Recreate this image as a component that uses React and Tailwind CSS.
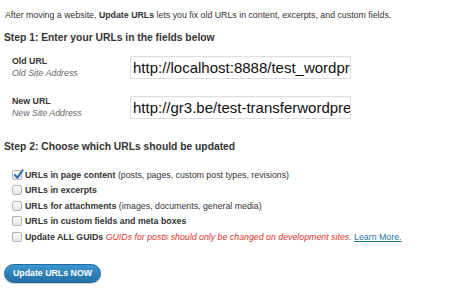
import React from 'react';

const options = [
  { label: 'URLs in page content', note: '(posts, pages, custom post types, revisions)', checked: true },
  { label: 'URLs in excerpts' },
  { label: 'URLs for attachments', note: '(images, documents, general media)' },
  { label: 'URLs in custom fields and meta boxes' },
];

function Box({ checked }) {
  return (
    <span className="relative inline-block w-[10px] h-[10px] shrink-0 rounded-[2px] border border-[#b4b4b4] bg-gradient-to-b from-[#fafafa] to-[#e6e6e6]">
      {checked && (
        <svg viewBox="0 0 12 12" className="absolute left-[0px] top-[-2px] w-[11px] h-[11px]">
          <path d="M2 6.5 L4.8 9.5 L10.5 1.5" fill="none" stroke="#2a6fb5" strokeWidth="2.2" strokeLinecap="round" strokeLinejoin="round" />
        </svg>
      )}
    </span>
  );
}

function UrlRow({ label, hint, value, className }) {
  return (
    <div className={`flex items-start ${className}`}>
      <div className="w-[130px] pl-[12px]">
        <div className="text-[8.8px] leading-[10px] font-bold">{label}</div>
        <div className="mt-[2px] text-[8.8px] leading-[11px] italic text-[#666]">{hint}</div>
      </div>
      <div className="w-[221px] h-[23px] border border-[#e0e0e0] shadow-[inset_0_1px_1px_rgba(0,0,0,0.04)] bg-white overflow-hidden whitespace-nowrap pl-[2px] text-[15px] leading-[21px] text-[#111]">
        {value}
      </div>
    </div>
  );
}

export default function App() {
  return (
    <div className="w-[470px] h-[300px] bg-white text-[#333] font-['Liberation_Sans',Arial,sans-serif] overflow-hidden">
      <p className="pl-[5px] pt-[10px] text-[8.8px] leading-[10px]">
        After moving a website, <b>Update URLs</b> lets you fix old URLs in content, excerpts, and custom fields.
      </p>

      <h2 className="pl-[4px] mt-[12px] text-[10.3px] leading-[12px] font-bold">Step 1: Enter your URLs in the fields below</h2>

      <UrlRow className="mt-[12px]" label="Old URL" hint="Old Site Address" value="http://localhost:8888/test_wordpress" />
      <UrlRow className="mt-[17px]" label="New URL" hint="New Site Address" value="http://gr3.be/test-transferwordpress" />

      <h2 className="pl-[4px] mt-[22px] text-[10.3px] leading-[12px] font-bold">Step 2: Choose which URLs should be updated</h2>

      <div className="mt-[14px] pl-[12px] flex flex-col text-[8.8px] leading-[10px]">
        {options.map((o) => (
          <div key={o.label} className="h-[15.5px] flex items-center gap-[3px]">
            <Box checked={o.checked} />
            <span className="whitespace-nowrap">
              <b>{o.label}</b>
              {o.note && <span> {o.note}</span>}
            </span>
          </div>
        ))}
        <div className="h-[15.5px] flex items-center gap-[3px]">
          <Box />
          <span className="whitespace-nowrap">
            <b>Update ALL GUIDs</b> <i className="text-[#e0322f]">GUIDs for posts should only be changed on development sites.</i>{' '}
            <a className="text-[#21759b] underline">Learn More.</a>
          </span>
        </div>
      </div>

      <div className="mt-[14px] pl-[4px]">
        <button className="h-[19px] w-[97px] rounded-full border border-[#1e6a9e] bg-gradient-to-b from-[#3d95cf] to-[#2371a8] text-white text-[8.8px] font-bold leading-[17px] shadow-[0_1px_1px_rgba(0,0,0,0.2)]">
          Update URLs NOW
        </button>
      </div>
    </div>
  );
}
